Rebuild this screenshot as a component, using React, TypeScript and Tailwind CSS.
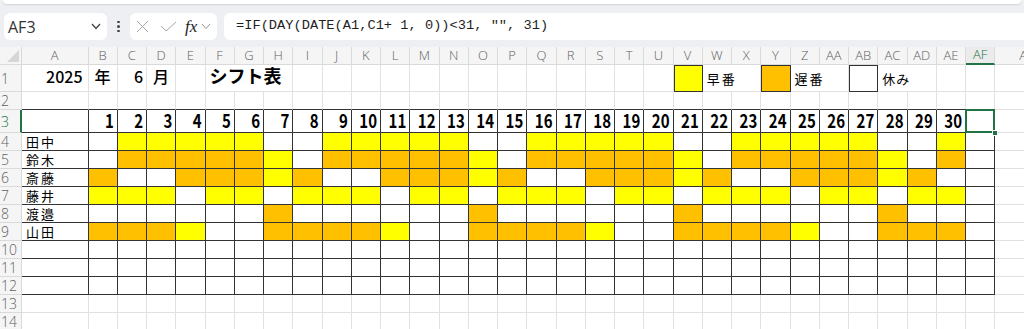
import React from "react";

const letters = [
  "A", "B", "C", "D", "E", "F", "G", "H", "I", "J", "K", "L", "M", "N", "O", "P", "Q",
  "R", "S", "T", "U", "V", "W", "X", "Y", "Z", "AA", "AB", "AC", "AD", "AE", "AF", "AG",
];

// y = 早番, o = 遅番, w = 休み (day 1..30)
const shifts: [string, string][] = [
  ["田中", "wyyyyywwyyyyywwyyyyywwyyyyywwy"],
  ["鈴木", "woooooywoooooywoooooywoooooywo"],
  ["斎藤", "owwoooyowwoooyowwoooyowwoooyow"],
  ["藤井", "yyywyywyyywyywyyywyywyyywyywyy"],
  ["渡邉", "wwwwwwowwwwwwowwwwwwowwwwwwoww"],
  ["山田", "oooywwooooywwooooywwooooywwooo"],
];

const fills: Record<string, string> = {
  y: "bg-[#ffff00]",
  o: "bg-[#ffc000]",
  w: "bg-white",
};

const GRID = "border-r border-b border-[#e1e1e1] bg-white";
const BOX = "border-r border-b border-[#333]";
const TOPLINE = "border-r border-b border-r-[#e1e1e1] border-b-[#333] bg-white";
const LEGEND = "border-r border-b border-[#333] shadow-[inset_1px_1px_0_#333]";
const JP = "font-['Noto_Sans_CJK_JP',sans-serif] text-black";

const RowHead = ({ n, active }: { n: number; active?: boolean }) => (
  <div
    className={`flex items-center pl-[1px] bg-[#f5f5f5] border-b border-[#dadada] text-[14px] font-light font-['Open_Sans','Noto_Sans',sans-serif] ${
      active ? "border-r-2 border-r-[#217346] text-[#217346]" : "border-r text-[#616161]"
    }`}
  >
    {n}
  </div>
);

const FormulaBar = () => (
  <div className="flex items-center h-[27px] mt-[9px] pl-[4px] font-['Open_Sans','Noto_Sans',sans-serif]">
    <div className="flex items-center justify-between w-[103px] h-full bg-white rounded-md pl-[4px] pr-[6px]">
      <span className="text-[16px] text-[#333]">AF3</span>
      <svg width="10" height="7" viewBox="0 0 10 7" fill="none" stroke="#444" strokeWidth="1.3">
        <polyline points="1,1 5,5.5 9,1" />
      </svg>
    </div>
    <div className="flex flex-col items-center justify-center gap-[2px] w-[23px]">
      <span className="w-[2.5px] h-[2.5px] rounded-full bg-[#444]" />
      <span className="w-[2.5px] h-[2.5px] rounded-full bg-[#444]" />
      <span className="w-[2.5px] h-[2.5px] rounded-full bg-[#444]" />
    </div>
    <div className="flex items-center w-[87px] h-full bg-white rounded-md pl-[6px]">
      <svg width="13" height="13" viewBox="0 0 13 13" stroke="#a8a8a8" strokeWidth="1">
        <line x1="1" y1="1" x2="12" y2="12" />
        <line x1="12" y1="1" x2="1" y2="12" />
      </svg>
      <svg className="ml-[11px]" width="17" height="11" viewBox="0 0 17 11" fill="none" stroke="#a8a8a8" strokeWidth="1">
        <polyline points="1,5 6,10 16,1" />
      </svg>
      <span className="ml-[8px] text-[17px] italic font-['Liberation_Serif',serif] text-[#222] leading-none">
        fx
      </span>
      <svg className="ml-[4px]" width="10" height="7" viewBox="0 0 10 7" fill="none" stroke="#999" strokeWidth="1">
        <polyline points="1,1 5,5.5 9,1" />
      </svg>
    </div>
    <div className="flex items-center flex-1 h-full ml-[7px] bg-white rounded-l-md pl-[12px]">
      <span className="whitespace-pre text-[13.7px] text-[#1f1f1f] font-['Liberation_Mono',monospace]">
        {'=IF(DAY(DATE(A1,C1+ 1, 0))<31, "", 31)'}
      </span>
    </div>
  </div>
);

const Sheet = () => {
  const days = Array.from({ length: 30 }, (_, i) => i + 1);
  const inner = letters.slice(0, 32); // A..AF

  return (
    <div className="grid grid-cols-[22px_66.5px_repeat(31,29.25px)_66px] grid-rows-[18px_27px_18px_23px_repeat(11,18px)] mt-[7px]">
      {/* column headers */}
      <div className="relative bg-[#f5f5f5] border-r border-b border-[#dadada]">
        <svg className="absolute right-[2px] bottom-[2px]" width="12" height="12" viewBox="0 0 12 12">
          <polygon points="12,0 12,12 0,12" fill="#d6d6d6" />
        </svg>
      </div>
      {letters.map((l) =>
        l === "AF" ? (
          <div
            key={l}
            className="flex items-center justify-center bg-[#ebebeb] border-r border-[#dadada] border-b-2 border-b-[#217346] text-[13px] text-[#217346] font-light font-['Open_Sans','Noto_Sans',sans-serif]"
          >
            {l}
          </div>
        ) : (
          <div
            key={l}
            className="flex items-center justify-center bg-[#f5f5f5] border-r border-b border-[#dadada] text-[13px] text-[#616161] font-light font-['Open_Sans','Noto_Sans',sans-serif]"
          >
            {l}
          </div>
        )
      )}

      {/* row 1 */}
      <RowHead n={1} />
      <div className={`${GRID} ${JP} flex items-end justify-end pr-[5px] pb-[3px] text-[16px] font-medium`}>2025</div>
      <div className={`${GRID} ${JP} flex items-end justify-center pb-[3px] text-[16px] font-medium`}>年</div>
      <div className={`${GRID} ${JP} flex items-end justify-end pr-[3px] pb-[3px] text-[16px] font-medium`}>6</div>
      <div className={`${GRID} ${JP} flex items-end justify-center pb-[3px] text-[16px] font-medium`}>月</div>
      <div className={GRID} />
      <div className={`${GRID} ${JP} col-span-3 flex items-end pl-[4px] pb-[2px] text-[18px] font-bold`}>
        シフト表
      </div>
      {letters.slice(8, 21).map((l) => (
        <div key={l} className={GRID} />
      ))}
      <div className={`${LEGEND} bg-[#ffff00]`} />
      <div className={`${GRID} ${JP} col-span-2 flex items-end pl-[4px] pb-[3px] text-[13px] tracking-[2px]`}>早番</div>
      <div className={`${LEGEND} bg-[#ffc000]`} />
      <div className={`${GRID} ${JP} col-span-2 flex items-end pl-[4px] pb-[3px] text-[13px] tracking-[2px]`}>遅番</div>
      <div className={`${LEGEND} bg-white`} />
      <div className={`${GRID} ${JP} col-span-2 flex items-end pl-[4px] pb-[3px] text-[13px] tracking-[1px]`}>休み</div>
      <div className={GRID} />
      <div className={GRID} />
      <div className={GRID} />

      {/* row 2 */}
      <RowHead n={2} />
      {inner.map((l) => (
        <div key={l} className={TOPLINE} />
      ))}
      <div className={GRID} />

      {/* row 3: days */}
      <RowHead n={3} active />
      <div className={`${BOX} bg-white`} />
      {days.map((d) => (
        <div
          key={d}
          className={`${BOX} bg-white ${JP} flex items-center justify-end pr-[3px] text-[15px] font-semibold`}
        >
          <span className="inline-block scale-y-[1.25]">{d}</span>
        </div>
      ))}
      <div className={`${BOX} bg-white relative`}>
        <div className="absolute -left-px -top-px -right-px -bottom-px z-10 border-2 border-[#217346]" />
        <div className="absolute -right-[4px] -bottom-[4px] z-20 w-[6px] h-[6px] bg-[#217346] border border-white" />
      </div>
      <div className={GRID} />

      {/* rows 4-9: staff */}
      {shifts.map(([name, plan], r) => (
        <React.Fragment key={name}>
          <RowHead n={r + 4} />
          <div className={`${BOX} bg-white ${JP} flex items-end pl-[4px] text-[13px] tracking-[2px] leading-[17px]`}>{name}</div>
          {plan.split("").map((c, i) => (
            <div key={i} className={`${BOX} ${fills[c]}`} />
          ))}
          <div className={`${BOX} bg-white`} />
          <div className={GRID} />
        </React.Fragment>
      ))}

      {/* rows 10-12: empty bordered */}
      {[10, 11, 12].map((n) => (
        <React.Fragment key={n}>
          <RowHead n={n} />
          {inner.map((l) => (
            <div key={l} className={`${BOX} bg-white`} />
          ))}
          <div className={GRID} />
        </React.Fragment>
      ))}

      {/* rows 13-14 */}
      {[13, 14].map((n) => (
        <React.Fragment key={n}>
          <RowHead n={n} />
          {letters.map((l) => (
            <div key={l} className={GRID} />
          ))}
        </React.Fragment>
      ))}
    </div>
  );
};

export default function App() {
  return (
    <div className="w-[1024px] h-[329px] overflow-hidden bg-[#edeff2]">
      <div className="h-[4px] mx-[3px] bg-white rounded-b-md shadow-[0_1px_2px_rgba(0,0,0,0.12)]" />
      <FormulaBar />
      <Sheet />
    </div>
  );
}
